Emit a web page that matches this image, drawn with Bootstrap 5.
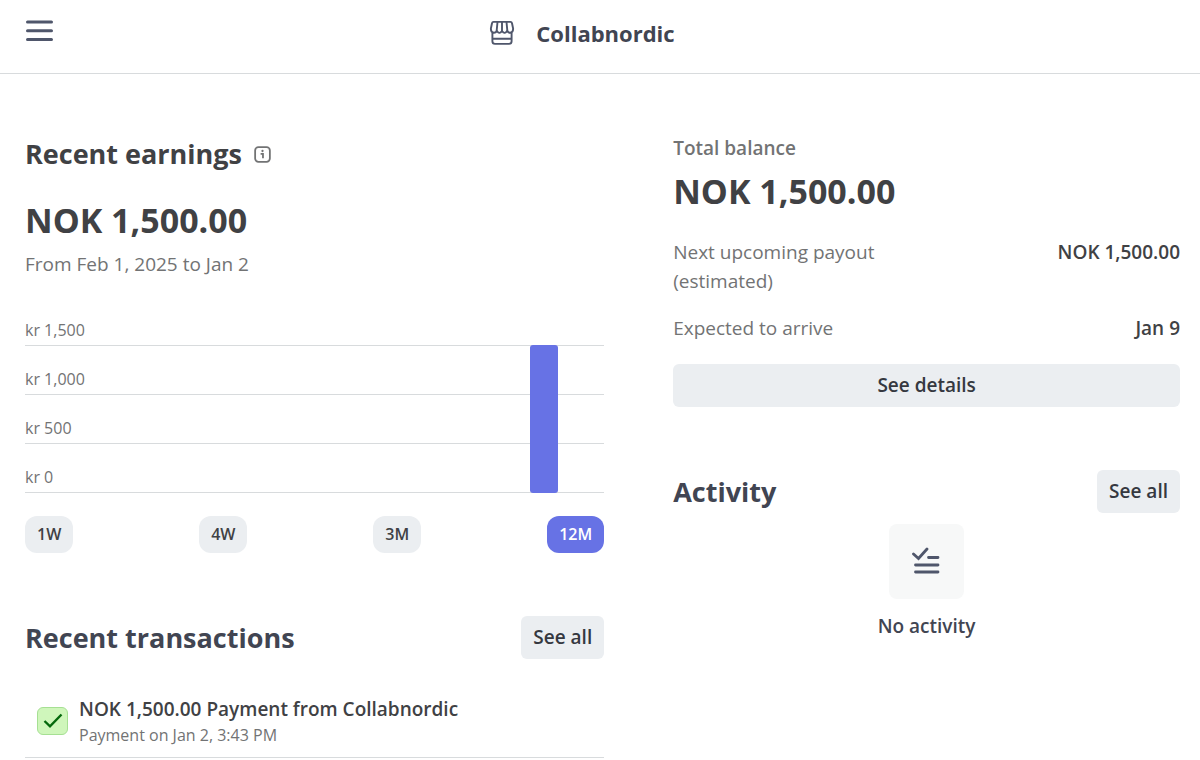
<!DOCTYPE html>
<html lang="en">
<head>
<meta charset="utf-8">
<meta name="viewport" content="width=device-width, initial-scale=1">
<title>Collabnordic</title>
<link href="https://cdn.jsdelivr.net/npm/bootstrap@5.3.0/dist/css/bootstrap.min.css" rel="stylesheet">
<style>
  body { font-family: "Open Sans", "Noto Sans", sans-serif; font-size: 19px; line-height: 29px; color: #404144; background: #fff; }
  .topbar { display: grid; grid-template-columns: 1fr auto 1fr; align-items: start; height: 74px; padding: 17px 25px 0; border-bottom: 1px solid #d8dbdd; }
  .menu-btn { justify-self: start; line-height: 0; }
  .brand { font-size: 22px; line-height: 32px; font-weight: 700; color: #414552; gap: 21px; margin-right: 36px; }
  .dash { display: grid; grid-template-columns: 8fr 7fr; gap: 69px; padding: 60px 20px 0 25px; }
  .earnings { padding-top: 2px; }
  .next-section { margin-top: 63px; }
  .title { font-size: 27px; line-height: 36px; font-weight: 700; margin: 0; }
  .slate { color: #414552; }
  .amount { font-size: 34px; line-height: 46px; font-weight: 700; margin: 5px 0; }
  .earnings .amount { margin: 25px 0 7px; }
  .muted { color: #727374; }
  .semi { font-weight: 600; }
  .chart { margin-top: 18px; }
  .tick { height: 49px; border-bottom: 1px solid #d8dbdd; font-size: 16px; line-height: 20px; padding-bottom: 5px; }
  .month-bar { bottom: 0; width: 28px; background: #6772e5; border-radius: 3px; }
  .ranges { margin-top: 23px; }
  .payout { margin-top: 18px; }
  .details { margin-top: 21px; }
  .soft { background: #ebeef1; border: 0; color: #353840; font-size: 19px; line-height: 29px; font-weight: 600; padding: 7px 12px; border-radius: 6px; }
  .soft:hover { background: #dfe3e8; }
  .range { background: #ebeef1; border: 0; color: #404144; font-size: 16px; line-height: 21px; font-weight: 600; padding: 8px 12px; border-radius: 12px; }
  .range.active { background: #6772e5; color: #fff; }
  .tx { gap: 11px; padding: 36px 12px 11px; border-bottom: 1px solid #d8dbdd; }
  .tx-note { font-size: 16px; line-height: 22px; }
  .paid { width: 31px; height: 28px; background: #cff6bb; border: 1px solid #a6e093; border-radius: 6px; }
  .tile { width: 75px; height: 75px; background: #f7f8f8; border-radius: 8px; margin: 11px auto 13px; }
</style>
</head>
<body>
<header class="topbar">
  <button type="button" class="menu-btn btn p-0 border-0" aria-label="Menu">
    <svg width="29" height="28" viewBox="0 0 29 28" fill="none" stroke="#4f566b" stroke-width="3" stroke-linecap="round"><path d="M2.500 5H26.500M2.500 13.800H26.500M2.500 22.500H26.500"/></svg>
  </button>
  <div class="brand d-flex align-items-center">
    <svg width="26" height="26" viewBox="0 0 26 26" fill="none" stroke="#4f566b" stroke-width="1.900" stroke-linejoin="round" stroke-linecap="round"><path d="M4.500 1.900H21.500Q22.700 1.900 23 3.200L24.100 8.500Q24.300 12.200 21.300 12.700Q18.600 12.700 18.300 10.300Q16 14.900 13 11.200Q10 14.900 7.700 10.300Q7.400 12.700 4.700 12.700Q1.700 12.200 1.900 8.500L3 3.200Q3.300 1.900 4.500 1.900ZM8.500 2L7.700 10.300M17.500 2L18.300 10.300M13 2V11M3.400 12.500V21.300Q3.400 23.900 6 23.900H20Q22.600 23.900 22.600 21.300V12.500M3.600 18.800H22.400"/></svg>
    <span>Collabnordic</span>
  </div>
</header>

<main class="dash">
  <div>
    <section class="earnings">
      <div class="d-flex align-items-center gap-2">
        <h2 class="title">Recent earnings</h2>
        <svg class="ms-1" width="17" height="17" viewBox="0 0 18 18" fill="none" stroke="#727374" stroke-width="1.900"><rect x="1.200" y="1.200" width="15.600" height="15.600" rx="3.500"/><path d="M7 8.300H9.500V13"/><circle cx="9" cy="5.300" r="1.200" fill="#727374" stroke="none"/></svg>
      </div>
      <p class="amount">NOK 1,500.00</p>
      <p class="muted mb-0">From Feb 1, 2025 to Jan 2</p>
      <div class="chart position-relative">
        <div class="tick muted d-flex align-items-end">kr 1,500</div>
        <div class="tick muted d-flex align-items-end">kr 1,000</div>
        <div class="tick muted d-flex align-items-end">kr 500</div>
        <div class="tick muted d-flex align-items-end">kr 0</div>
        <div class="month-bar position-absolute" style="left:87.2%;height:75.5%"></div>
      </div>
      <div class="ranges d-flex justify-content-between">
        <button type="button" class="range">1W</button>
        <button type="button" class="range">4W</button>
        <button type="button" class="range">3M</button>
        <button type="button" class="range active">12M</button>
      </div>
    </section>
    <section class="next-section">
      <div class="d-flex justify-content-between align-items-center">
        <h2 class="title slate">Recent transactions</h2>
        <button type="button" class="soft">See all</button>
      </div>
      <div class="tx d-flex align-items-center">
        <div class="paid d-flex align-items-center justify-content-center">
          <svg width="20" height="16" viewBox="0 0 20 16" fill="none" stroke="#05690d" stroke-width="2.400"><path d="M1.500 8L7 13.300L18.500 1.500"/></svg>
        </div>
        <div>
          <div class="semi">NOK 1,500.00 Payment from Collabnordic</div>
          <div class="tx-note muted">Payment on Jan 2, 3:43 PM</div>
        </div>
      </div>
    </section>
  </div>

  <div>
    <section>
      <div class="muted semi">Total balance</div>
      <p class="amount">NOK 1,500.00</p>
      <div class="d-flex justify-content-between mt-4">
        <span class="muted">Next upcoming payout<br>(estimated)</span>
        <span class="semi">NOK 1,500.00</span>
      </div>
      <div class="payout d-flex justify-content-between">
        <span class="muted">Expected to arrive</span>
        <span class="semi">Jan 9</span>
      </div>
      <button type="button" class="soft details w-100">See details</button>
    </section>
    <section class="next-section">
      <div class="d-flex justify-content-between align-items-center">
        <h2 class="title slate">Activity</h2>
        <button type="button" class="soft">See all</button>
      </div>
      <div class="tile d-flex align-items-center justify-content-center">
        <svg width="30" height="30" viewBox="1 2 30 30" fill="none" stroke="#4f566b" stroke-width="2.800" stroke-linecap="round"><path d="M2.500 9L7.500 13.500L16 4M17.500 12.500H27M4.500 20H27M4.500 27H27"/></svg>
      </div>
      <div class="slate semi text-center">No activity</div>
    </section>
  </div>
</main>
<script src="https://cdn.jsdelivr.net/npm/bootstrap@5.3.0/dist/js/bootstrap.bundle.min.js"></script>
</body>
</html>
